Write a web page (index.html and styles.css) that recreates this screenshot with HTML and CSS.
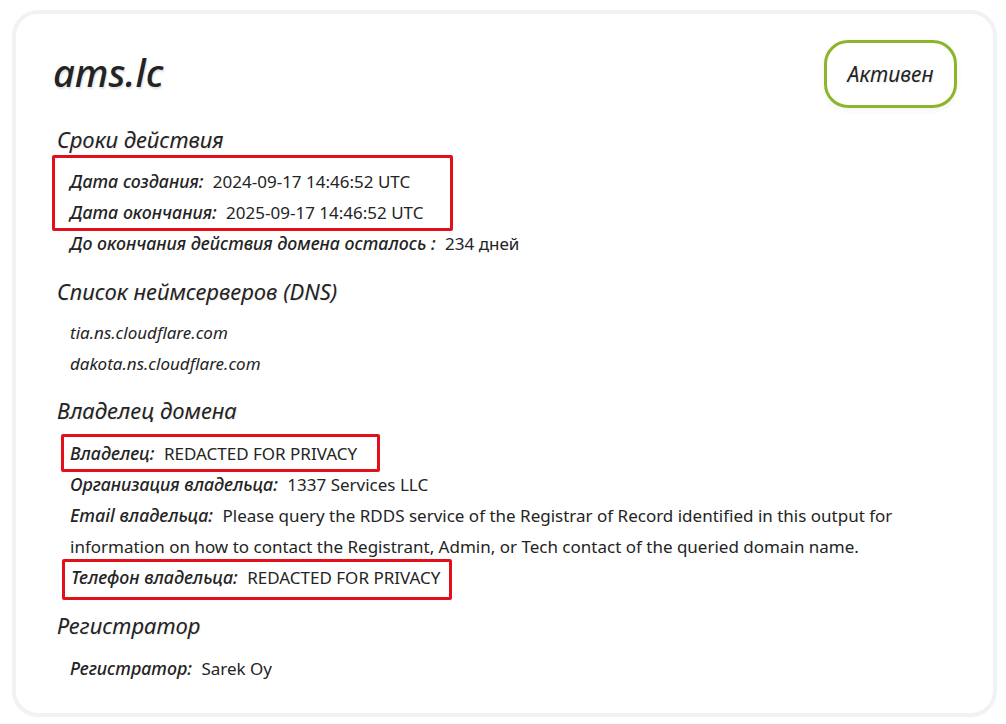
FILE: index.html
```html
<!DOCTYPE html>
<html lang="ru">
<head>
<meta charset="utf-8">
<title>ams.lc</title>
<link rel="stylesheet" href="styles.css">
</head>
<body>
<div class="card">
  <div class="head">
    <h1 class="domain">ams.lc</h1>
    <div class="badge">Активен</div>
  </div>

  <section class="group">
    <h2 class="group-title">Сроки действия</h2>
    <div class="mark mark-dates">
      <div class="row"><span class="label">Дата создания:</span> <span class="value">2024-09-17 14:46:52 UTC</span></div>
      <div class="row"><span class="label">Дата окончания:</span> <span class="value">2025-09-17 14:46:52 UTC</span></div>
    </div>
    <div class="row"><span class="label">До окончания действия домена осталось :</span> <span class="value">234 дней</span></div>
  </section>

  <section class="group group-dns">
    <h2 class="group-title">Список неймсерверов (DNS)</h2>
    <div class="row"><span class="ns">tia.ns.cloudflare.com</span></div>
    <div class="row"><span class="ns">dakota.ns.cloudflare.com</span></div>
  </section>

  <section class="group group-owner">
    <h2 class="group-title">Владелец домена</h2>
    <div class="mark mark-owner">
      <div class="row"><span class="label">Владелец:</span> <span class="value">REDACTED FOR PRIVACY</span></div>
    </div>
    <div class="row"><span class="label">Организация владельца:</span> <span class="value">1337 Services LLC</span></div>
    <div class="row"><span class="label">Email владельца:</span> <span class="value">Please query the RDDS service of the Registrar of Record identified in this output for information on how to contact the Registrant, Admin, or Tech contact of the queried domain name.</span></div>
    <div class="mark mark-phone">
      <div class="row"><span class="label">Телефон владельца:</span> <span class="value">REDACTED FOR PRIVACY</span></div>
    </div>
  </section>

  <section class="group">
    <h2 class="group-title">Регистратор</h2>
    <div class="row"><span class="label">Регистратор:</span> <span class="value">Sarek Oy</span></div>
  </section>
</div>
</body>
</html>
```

FILE: styles.css
```css
* { box-sizing: border-box; }
html, body { margin: 0; padding: 0; background: #ffffff; }
body {
  font-family: "Noto Sans", "Open Sans", sans-serif;
  color: #242424;
  padding: 10px 9px 0 12px;
}
.card {
  height: 707px;
  border: 4px solid #f1f2f3;
  border-radius: 26px;
  padding: 26px 36px 0 41px;
}
.head {
  display: flex;
  justify-content: space-between;
  align-items: flex-start;
}
.domain {
  margin: 12px 0 0 -4px;
  font-size: 38px;
  line-height: 40px;
  font-style: italic;
  font-weight: 500;
  color: #232323;
  text-shadow: 1px 2px 2px rgba(0,0,0,0.12);
}
.badge {
  border: 3px solid #8db52b;
  border-radius: 24px;
  height: 68px;
  width: 133px;
  display: flex;
  align-items: center;
  justify-content: center;
  font-style: italic;
  font-size: 21px;
  color: #232323;
  box-shadow: 0 2px 6px rgba(0,0,0,0.06);
  text-shadow: 1px 1px 1px rgba(0,0,0,0.08);
}
.group-title {
  margin: 17px 0 0 0;
  font-size: 22px;
  font-weight: 400;
  font-style: italic;
  line-height: 30px;
  color: #232323;
  text-shadow: 1px 1px 1px rgba(0,0,0,0.08);
}
.head + .group .group-title { margin-top: 16px; }
.group-owner .group-title { margin-top: 16px; }
.row {
  padding-left: 13px;
  font-size: 17px;
  line-height: 31px;
}
.group-title + .row { margin-top: 13px; }
.group-dns .group-title + .row { margin-top: 11px; }
.label {
  font-style: italic;
  font-weight: 500;
  font-size: 17.8px;
}
.ns { font-style: italic; }
.value { margin-left: 5px; }
.mark {
  width: fit-content;
  border: 3px solid #e3101b;
  border-radius: 2px;
}
.mark-dates {
  margin: 1px 0 -3px -5px;
  padding: 8px 27px 0 2px;
}
.mark-owner {
  margin: 9px 0 -3px 4px;
  padding: 1px 20px 0 0;
}
.mark-owner .row, .mark-phone .row { padding-left: 6px; }
.mark-phone {
  margin: -3px 0 -7px 5px;
  padding: 0 9px 4px 0;
}
```
